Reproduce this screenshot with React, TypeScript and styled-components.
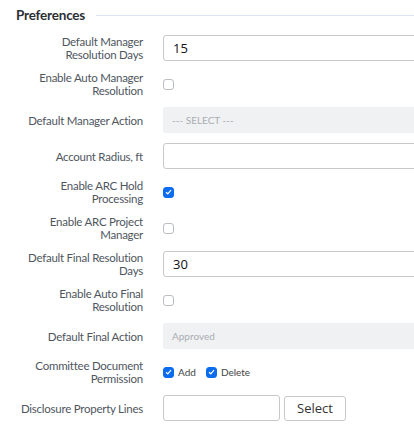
import React from 'react'
import styled, { createGlobalStyle } from 'styled-components'

const GlobalStyle = createGlobalStyle`
  html, body {
    margin: 0;
    padding: 0;
    background: #fff;
    overflow: hidden;
  }
  body {
    font-family: Lato, 'Open Sans', sans-serif;
    color: #333;
  }
`

const Panel = styled.div`
  width: 414px;
  padding: 6px 0 0 0;
  box-sizing: border-box;
  overflow: hidden;
`

const Header = styled.div`
  display: flex;
  align-items: center;
  gap: 11px;
  padding-left: 16px;
  height: 18px;
  margin-bottom: 11px;
`

const Title = styled.h3`
  margin: 0;
  font-size: 13.5px;
  letter-spacing: -0.2px;
  font-weight: 700;
  color: #2b2f33;
  white-space: nowrap;
`

const Rule = styled.div`
  flex: 1;
  height: 1px;
  background: #dbe4f0;
`

const Form = styled.div`
  display: flex;
  flex-direction: column;
  gap: 10px;
`

const Row = styled.div`
  display: flex;
  align-items: center;
  gap: 20px;
  min-height: 26px;
`

const Label = styled.label`
  width: 143px;
  flex-shrink: 0;
  text-align: right;
  font-size: 11.5px;
  letter-spacing: -0.25px;
  line-height: 13px;
  color: #4f565e;
  white-space: pre-line;
`

const Control = styled.div`
  flex: 1;
  display: flex;
  align-items: center;
  gap: 4px;
  min-width: 0;
  overflow: hidden;
`

const TextInput = styled.input<{ $w?: number }>`
  width: ${(p) => (p.$w ? `${p.$w}px` : '300px')};
  height: 26px;
  box-sizing: border-box;
  border: 1px solid #c9c9c9;
  border-radius: 3px;
  padding: 0 9px;
  font-family: 'Open Sans', sans-serif;
  font-size: 13px;
  color: #111;
  flex-shrink: 0;
  outline: none;
`

const DisabledSelect = styled.div`
  width: 300px;
  height: 26px;
  box-sizing: border-box;
  background: #f0f1f3;
  border-radius: 3px;
  padding: 0 9px;
  display: flex;
  align-items: center;
  font-size: 10px;
  color: #a9adb2;
  flex-shrink: 0;
`

const Box = styled.span<{ $checked?: boolean }>`
  width: 11px;
  height: 11px;
  box-sizing: border-box;
  border-radius: 3px;
  border: 1px solid ${(p) => (p.$checked ? '#0b6cf0' : '#b9bec4')};
  background: ${(p) => (p.$checked ? '#0b6cf0' : '#fff')};
  display: inline-flex;
  align-items: center;
  justify-content: center;
  flex-shrink: 0;
`

const CheckLabel = styled.span`
  font-size: 10px;
  color: #444;
  margin-right: 6px;
`

const Button = styled.button`
  height: 25px;
  width: 62px;
  box-sizing: border-box;
  border: 1px solid #c9c9c9;
  border-radius: 3px;
  background: #fff;
  font-family: 'Open Sans', sans-serif;
  font-size: 13px;
  color: #333;
  flex-shrink: 0;
`

const Check: React.FC<{ checked?: boolean }> = ({ checked }) => (
  <Box $checked={checked}>
    {checked && (
      <svg width="7" height="6" viewBox="0 0 7 6">
        <path d="M1 3.2 L2.8 4.8 L6 1.2" fill="none" stroke="#fff" strokeWidth="1.2" />
      </svg>
    )}
  </Box>
)

export default function App() {
  return (
    <Panel>
      <GlobalStyle />
      <Header>
        <Title>Preferences</Title>
        <Rule />
      </Header>
      <Form>
        <Row>
          <Label>{'Default Manager\nResolution Days'}</Label>
          <Control>
            <TextInput defaultValue="15" />
          </Control>
        </Row>
        <Row>
          <Label>{'Enable Auto Manager\nResolution'}</Label>
          <Control>
            <Check />
          </Control>
        </Row>
        <Row>
          <Label>Default Manager Action</Label>
          <Control>
            <DisabledSelect>--- SELECT ---</DisabledSelect>
          </Control>
        </Row>
        <Row>
          <Label>Account Radius, ft</Label>
          <Control>
            <TextInput />
          </Control>
        </Row>
        <Row>
          <Label>{'Enable ARC Hold\nProcessing'}</Label>
          <Control>
            <Check checked />
          </Control>
        </Row>
        <Row>
          <Label>{'Enable ARC Project\nManager'}</Label>
          <Control>
            <Check />
          </Control>
        </Row>
        <Row>
          <Label>{'Default Final Resolution\nDays'}</Label>
          <Control>
            <TextInput defaultValue="30" />
          </Control>
        </Row>
        <Row>
          <Label>{'Enable Auto Final\nResolution'}</Label>
          <Control>
            <Check />
          </Control>
        </Row>
        <Row>
          <Label>Default Final Action</Label>
          <Control>
            <DisabledSelect>Approved</DisabledSelect>
          </Control>
        </Row>
        <Row>
          <Label>{'Committee Document\nPermission'}</Label>
          <Control>
            <Check checked />
            <CheckLabel>Add</CheckLabel>
            <Check checked />
            <CheckLabel>Delete</CheckLabel>
          </Control>
        </Row>
        <Row>
          <Label>Disclosure Property Lines</Label>
          <Control>
            <TextInput $w={117} />
            <Button>Select</Button>
          </Control>
        </Row>
      </Form>
    </Panel>
  )
}
